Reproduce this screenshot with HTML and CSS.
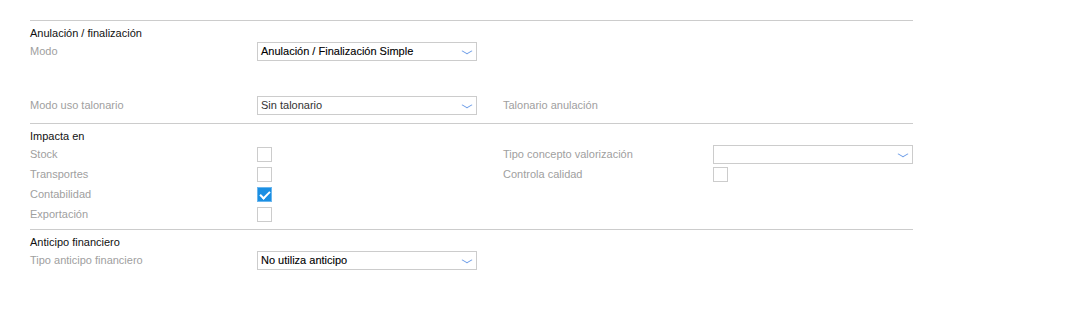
FILE: index.html
```html
<!DOCTYPE html>
<html lang="es">
<head>
  <meta charset="UTF-8" />
  <title>Anulación / finalización</title>
  <link rel="stylesheet" href="styles.css">
</head>
<body>

  <div class="form-page">

    <div class="section section-anulacion">
      <div class="section-title">Anulación / finalización</div>
      <div class="row">
        <span class="label">Modo</span>
        <div class="select strong"><span>Anulación / Finalización Simple</span><i class="chevron"></i></div>
      </div>
      <div class="row row-talonario">
        <span class="label">Modo uso talonario</span>
        <div class="select"><span>Sin talonario</span><i class="chevron"></i></div>
        <span class="label">Talonario anulación</span>
      </div>
    </div>

    <div class="section section-impacta">
      <div class="section-title">Impacta en</div>
      <div class="row">
        <span class="label">Stock</span>
        <span class="check"></span>
        <span class="label">Tipo concepto valorización</span>
        <div class="select narrow"><span></span><i class="chevron"></i></div>
      </div>
      <div class="row">
        <span class="label">Transportes</span>
        <span class="check"></span>
        <span class="label">Controla calidad</span>
        <span class="check"></span>
      </div>
      <div class="row">
        <span class="label">Contabilidad</span>
        <span class="check checked"></span>
      </div>
      <div class="row">
        <span class="label">Exportación</span>
        <span class="check"></span>
      </div>
    </div>

    <div class="section section-anticipo">
      <div class="section-title">Anticipo financiero</div>
      <div class="row">
        <span class="label">Tipo anticipo financiero</span>
        <div class="select strong"><span>No utiliza anticipo</span><i class="chevron"></i></div>
      </div>
    </div>

  </div>

</body>
</html>
```

FILE: styles.css
```css
body {
  margin: 0;
  padding: 0;
  background: #fff;
  font-family: 'Liberation Sans', Arial, sans-serif;
  font-size: 11px;
  color: #000;
}

.form-page {
  width: 883px;
  padding: 20px 0 0 30px;
}

.section {
  border-top: 1px solid #ccc;
  padding-top: 4px;
}

.section-anulacion {
  padding-bottom: 8px;
}

.section-impacta {
  padding-bottom: 5px;
}

.section-title {
  height: 16px;
  line-height: 16px;
  color: #111;
}

.row {
  display: grid;
  grid-template-columns: 227px 220px 26px 210px 200px;
  align-items: center;
  height: 20px;
}

.row > :nth-child(3) {
  grid-column: 4;
}

.row > :nth-child(4) {
  grid-column: 5;
}

.row-talonario {
  margin-top: 34px;
}

.label {
  color: #a0a0a0;
}

.select {
  position: relative;
  box-sizing: border-box;
  height: 19px;
  border: 1px solid #ccc;
  background: #fff;
  padding: 0 20px 0 3px;
  line-height: 17px;
  color: #333;
  white-space: nowrap;
  overflow: hidden;
}

.select.strong {
  color: #000;
  -webkit-text-stroke: 0.1px #000;
}

.select.narrow {
  width: 200px;
}

.chevron {
  position: absolute;
  right: 6px;
  top: 5px;
  width: 5px;
  height: 5px;
  border-right: 1px solid #6f9ee8;
  border-bottom: 1px solid #6f9ee8;
  transform: scale(1.3, 0.75) rotate(45deg);
}

.check {
  box-sizing: border-box;
  display: block;
  width: 15px;
  height: 15px;
  border: 1px solid #ccc;
  background: #fff;
}

.check.checked {
  position: relative;
  background: #1a8fe3;
  border-color: #6ab6ee;
}

.check.checked::after {
  content: "";
  position: absolute;
  left: 4px;
  top: 1px;
  width: 4px;
  height: 8px;
  border-right: 2px solid #fff;
  border-bottom: 2px solid #fff;
  transform: rotate(45deg);
}
```
